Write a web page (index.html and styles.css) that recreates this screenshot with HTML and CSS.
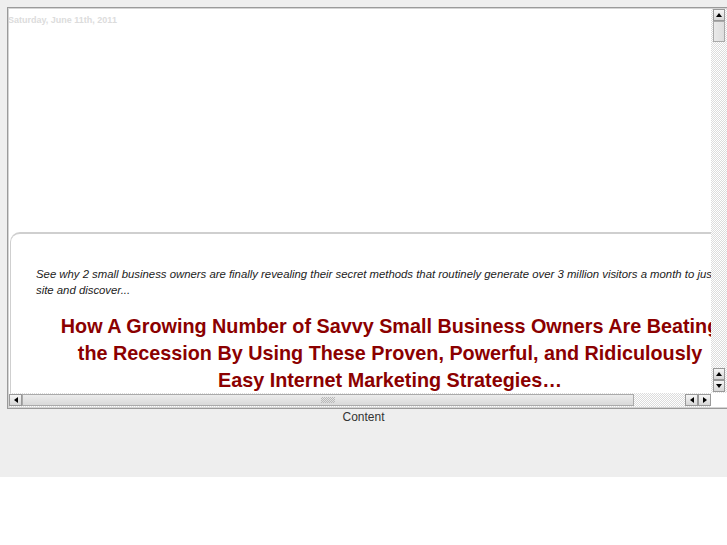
FILE: index.html
```html
<!DOCTYPE html>
<html lang="en">
<head>
  <meta charset="UTF-8">
  <title>Content</title>
  <link rel="stylesheet" href="styles.css">
</head>
<body>

  <div class="page">
    <div class="frame">
      <div class="view">
        <div class="date">Saturday, June 11th, 2011</div>
        <div class="box">
          <p class="intro">See why 2 small business owners are finally revealing their secret methods that routinely generate over 3 million visitors a month to just one<br>site and discover...</p>
          <h1 class="headline">How A Growing Number of Savvy Small Business Owners Are Beating<br>the Recession By Using These Proven, Powerful, and Ridiculously<br>Easy Internet Marketing Strategies&hellip;</h1>
        </div>
      </div>

      <!-- fake scrollbars of the old frame -->
      <div class="vbar">
        <span class="btn up"></span>
        <span class="thumb"></span>
        <span class="track"></span>
        <span class="btn up"></span>
        <span class="btn down"></span>
      </div>
      <div class="hbar">
        <span class="btn left"></span>
        <span class="thumb"><i class="grip"></i></span>
        <span class="track"></span>
        <span class="btn left"></span>
        <span class="btn right"></span>
      </div>
      <div class="corner"></div>
    </div>

    <div class="caption">Content</div>
  </div>

</body>
</html>
```

FILE: styles.css
```css
body {
  margin: 0;
  background-color: #fff;
  font-family: 'Liberation Sans', Arial, sans-serif;
}

.page {
  height: 477px;
  width: 727px;
  overflow: hidden;
  background-color: #eeeeee;
}

.frame {
  display: grid;
  grid-template-columns: 702px 16px;
  grid-template-rows: 384px 14px;
  width: 718px;
  margin: 7px 0 0 7px;
  border: 1px solid #9a9a9a;
  box-shadow: inset 0 0 0 1px #d4d4d4;
  padding: 1px;
  background-color: #fff;
}

.view {
  overflow: hidden;
  background-color: #fff;
}

.date {
  margin: 6px 0 0 -1px;
  font-size: 9px;
  line-height: 10px;
  font-weight: bold;
  color: #dcdcdc;
}

.box {
  width: 760px;
  margin: 207px 0 0 1px;
  padding: 32px 0 0 25px;
  border-top: 2px solid #cfcfcf;
  border-left: 1px solid #cfcfcf;
  border-top-left-radius: 10px;
}

.intro {
  width: 708px;
  margin: 0;
  font-size: 11.35px;
  line-height: 16px;
  font-style: italic;
  color: #222;
}

.headline {
  width: 708px;
  margin: 15px 0 0 0;
  font-size: 19.8px;
  line-height: 27px;
  font-weight: bold;
  text-align: center;
  color: #8b0000;
}

/* scrollbars */
.vbar,
.hbar {
  display: flex;
  background-color: #fff;
  background-image: repeating-conic-gradient(#dcdcdc 0 25%, #fff 0 50%);
  background-size: 2px 2px;
}

.vbar {
  flex-direction: column;
  padding: 0 0 1px 2px;
}

.hbar {
  padding: 1px 0 1px 0;
}

.corner {
  background-color: #fff;
}

.btn {
  display: flex;
  align-items: center;
  justify-content: center;
  box-sizing: border-box;
  width: 12px;
  height: 12px;
  border: 1px solid #999;
  background: linear-gradient(#f6f6f6, #d6d6d6);
}

.btn::before {
  content: "";
  width: 0;
  height: 0;
  border: 3px solid transparent;
}

.btn.up::before {
  border-bottom: 4px solid #000;
  border-top-width: 0;
}

.btn.down::before {
  border-top: 4px solid #000;
  border-bottom-width: 0;
}

.btn.left::before {
  border-right: 4px solid #000;
  border-left-width: 0;
}

.btn.right::before {
  border-left: 4px solid #000;
  border-right-width: 0;
}

.hbar .btn {
  width: 13px;
}

.thumb {
  box-sizing: border-box;
  border: 1px solid #aaa;
  background: linear-gradient(90deg, #e9e9e9, #dedede);
}

.vbar .thumb {
  width: 12px;
  height: 21px;
}

.vbar .track {
  flex: 1;
}

.hbar .thumb {
  display: flex;
  align-items: center;
  justify-content: center;
  width: 612px;
  height: 12px;
  background: linear-gradient(#ececec, #d9d9d9);
}

.grip {
  width: 14px;
  height: 6px;
  background-image: repeating-conic-gradient(#b8b8b8 0 25%, transparent 0 50%);
  background-size: 2px 2px;
}

.hbar .track {
  flex: 1;
}

.caption {
  padding-top: 1px;
  font-size: 12px;
  line-height: 14px;
  text-align: center;
  color: #333;
}
```
